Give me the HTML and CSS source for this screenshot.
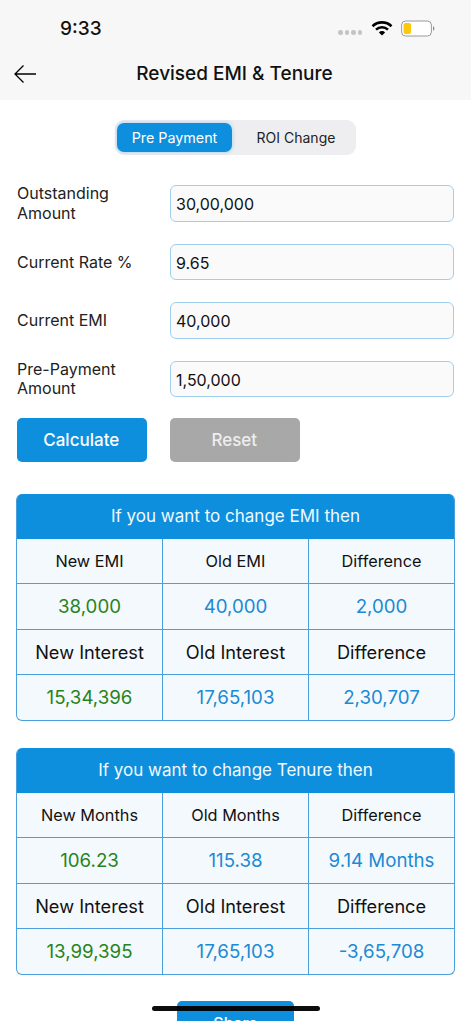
FILE: index.html
```html
<!DOCTYPE html>
<html lang="en">
<head>
<meta charset="utf-8">
<title>Revised EMI &amp; Tenure</title>
<link rel="stylesheet" href="styles.css">
</head>
<body>
<div class="screen">
  <header class="top">
    <div class="status">
      <span class="time">9:33</span>
      <div class="status-icons">
        <span class="dots"><i></i><i></i><i></i><i></i></span>
        <svg class="wifi" width="22" height="16" viewBox="0 0 22 16"><path d="M1.500 6.200a13.800 13.800 0 0 1 19 0" fill="none" stroke="#000" stroke-width="2.600"/><path d="M5 9.600a8.800 8.800 0 0 1 12 0" fill="none" stroke="#000" stroke-width="2.600"/><path d="M11 15.600l-3.100-3.200a4.400 4.400 0 0 1 6.200 0z" fill="#000"/></svg>
        <svg class="battery" width="34" height="17" viewBox="0 0 34 17"><rect x="0.600" y="1" width="29.800" height="15" rx="4" fill="#fff" stroke="#9a9a9a" stroke-width="1"/><rect x="2.500" y="3" width="7.500" height="11" rx="2" fill="#fcc80a"/><path d="M32 6.300c1 .4 1.400 1.200 1.400 2.200s-.4 1.800-1.400 2.200z" fill="#8a8a8a"/></svg>
      </div>
    </div>
    <div class="nav">
      <svg class="back" width="24" height="20" viewBox="0 0 24 20"><path d="M23 10H2M10.500 1.500L2 10l8.500 8.500" fill="none" stroke="#000" stroke-width="1.300"/></svg>
      <h1 class="title">Revised EMI &amp; Tenure</h1>
    </div>
  </header>

  <main class="content">
    <div class="segment-wrap">
      <div class="segment">
        <span class="seg seg-active">Pre Payment</span>
        <span class="seg">ROI Change</span>
      </div>
    </div>

    <div class="form">
      <div class="row"><label class="label">Outstanding Amount</label><div class="input">30,00,000</div></div>
      <div class="row"><label class="label">Current Rate %</label><div class="input">9.65</div></div>
      <div class="row"><label class="label">Current EMI</label><div class="input">40,000</div></div>
      <div class="row"><label class="label">Pre-Payment Amount</label><div class="input">1,50,000</div></div>
    </div>

    <div class="actions">
      <div class="btn btn-blue">Calculate</div>
      <div class="btn btn-grey">Reset</div>
    </div>

    <section class="card">
      <div class="card-head">If you want to change EMI then</div>
      <div class="grid">
        <div class="cell small">New EMI</div><div class="cell small">Old EMI</div><div class="cell small">Difference</div>
        <div class="cell green">38,000</div><div class="cell blue">40,000</div><div class="cell blue">2,000</div>
        <div class="cell">New Interest</div><div class="cell">Old Interest</div><div class="cell">Difference</div>
        <div class="cell green">15,34,396</div><div class="cell blue">17,65,103</div><div class="cell blue">2,30,707</div>
      </div>
    </section>

    <section class="card">
      <div class="card-head">If you want to change Tenure then</div>
      <div class="grid">
        <div class="cell small">New Months</div><div class="cell small">Old Months</div><div class="cell small">Difference</div>
        <div class="cell green">106.23</div><div class="cell blue">115.38</div><div class="cell blue">9.14 Months</div>
        <div class="cell">New Interest</div><div class="cell">Old Interest</div><div class="cell">Difference</div>
        <div class="cell green">13,99,395</div><div class="cell blue">17,65,103</div><div class="cell blue">-3,65,708</div>
      </div>
    </section>

    <div class="share-wrap"><div class="share">Share</div></div>
  </main>
  <div class="home"></div>
</div>
</body>
</html>
```
FILE: styles.css
```css
* { box-sizing: border-box; }
html, body { margin: 0; padding: 0; background: #fff; }
body { font-family: Inter, "Liberation Sans", sans-serif; color: #111; }
.screen { position: relative; width: 471px; height: 1021px; overflow: hidden; background: #fff; }

.top { height: 100px; background: #f7f7f7; }
.status { height: 58px; position: relative; display: flex; justify-content: space-between; padding: 17px 36px 0 60px; }
.time { font-size: 19px; font-weight: 500; line-height: 23px; color: #111; }
.status-icons { display: flex; align-items: flex-start; gap: 8px; padding-top: 3px; }
.dots { display: flex; gap: 2px; margin-top: 10px; margin-right: 1px; }
.dots i { width: 4.500px; height: 4.500px; border-radius: 50%; background: #c4c4c4; display: block; }
.nav { position: relative; height: 32px; display: flex; align-items: center; justify-content: center; }
.back { position: absolute; left: 13px; top: 6px; }
.title { margin: 0 2px 0 0; font-size: 19px; font-weight: 500; color: #111; line-height: 32px; }

.content { display: flex; flex-direction: column; }
.segment-wrap { display: flex; justify-content: center; padding-top: 20px; }
.segment { display: flex; width: 241px; height: 35px; padding: 3px 2px; background: #eeeef0; border-radius: 9px; }
.seg { flex: 0 0 115px; display: flex; align-items: center; justify-content: center; font-size: 14.300px; color: #222; border-radius: 7px; }
.seg + .seg { flex: 1; padding-left: 6px; font-size: 14px; }
.seg-active { background: #0d8fdd; color: #fff; box-shadow: 0 0 4px rgba(13,143,221,.35); }

.form { display: flex; flex-direction: column; gap: 22px; padding: 30px 17px 0; }
.row { display: flex; align-items: center; height: 36.500px; }
.label { flex: 0 0 153px; font-size: 16px; line-height: 19.500px; color: #222; padding: 1px 30px 0 0; }
.input { flex: 1; height: 36.500px; border: 1px solid #9fcfec; border-radius: 6px; background: #fafafa; font-size: 16px; line-height: 36.500px; padding-left: 5px; color: #111; }

.actions { display: flex; gap: 23.500px; padding: 21px 17px 0; }
.btn { width: 129.500px; height: 44px; border-radius: 5px; display: flex; align-items: center; justify-content: center; padding-right: 1px; font-size: 17px; font-weight: 500; color: #fff; }
.btn-blue { background: #0d8fdd; }
.btn-grey { background: #a8a8a8; color: #eee; }

.card { margin: 32px 16px 0; width: 439px; border: 1px solid #4a9fdc; border-top: 0; border-radius: 6px; overflow: hidden; background: #f4f9fd; }
.card + .card { margin-top: 27px; }
.card-head { height: 45px; margin: 0 -1px; padding-bottom: 1px; background: #0d8fdd; color: #f2f9fe; font-size: 17px; font-weight: 400; display: flex; align-items: center; justify-content: center; }
.grid { display: grid; grid-template-columns: 146px 146px 1fr; grid-auto-rows: 45.250px; }
.cell { display: flex; align-items: center; justify-content: center; font-size: 18.200px; color: #111; border-right: 1px solid #4a9fdc; border-bottom: 1px solid #4a9fdc; }
.cell:nth-child(3n) { border-right: 0; }
.cell:nth-last-child(-n+3) { border-bottom: 0; }
.small { font-size: 16.300px; }
.green { color: #27841c; font-size: 18.700px; }
.blue { color: #2089d4; font-size: 18.700px; }

.share-wrap { display: flex; justify-content: center; padding-top: 26px; }
.share { width: 117px; height: 44px; background: #0d8fdd; color: #fff; border-radius: 5px; display: flex; align-items: center; justify-content: center; font-size: 16px; font-weight: 500; }

.home { position: absolute; left: 152px; top: 1005.500px; width: 168px; height: 5.500px; border-radius: 3px; background: #000; opacity: .95; }
```
